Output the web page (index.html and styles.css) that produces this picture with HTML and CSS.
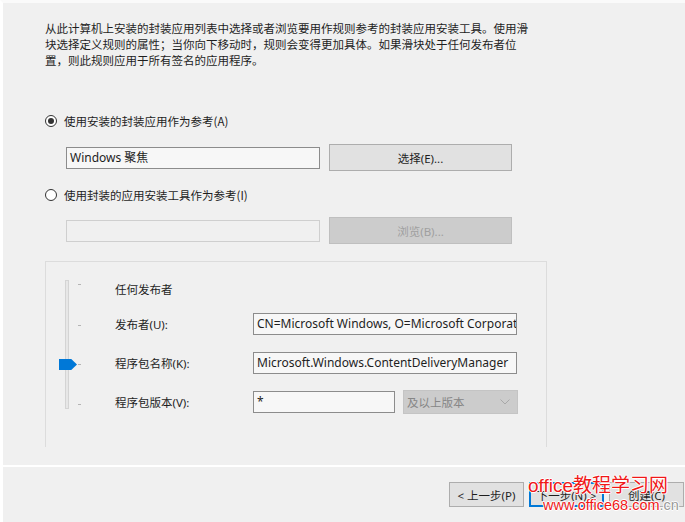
FILE: index.html
```html
<!DOCTYPE html>
<html lang="zh-CN">
<head>
<meta charset="utf-8">
<title>封装应用规则</title>
<link rel="stylesheet" href="styles.css">
</head>
<body>
<div class="window">
  <span class="side-mark"></span>
  <div class="main">
    <p class="intro">从此计算机上安装的封装应用列表中选择或者浏览要用作规则参考的封装应用安装工具。使用滑<br>块选择定义规则的属性；当你向下移动时，规则会变得更加具体。如果滑块处于任何发布者位<br>置，则此规则应用于所有签名的应用程序。</p>

    <div class="radio-row first"><span class="radio checked"></span><span>使用安装的封装应用作为参考(A)</span></div>
    <div class="field-row r-a">
      <div class="textbox wide">Windows 聚焦</div>
      <div class="btn">选择(E)...</div>
    </div>

    <div class="radio-row second"><span class="radio"></span><span>使用封装的应用安装工具作为参考(I)</span></div>
    <div class="field-row r-b">
      <div class="textbox wide disabled"></div>
      <div class="btn disabled">浏览(B)...</div>
    </div>

    <div class="group">
      <div class="slider">
        <span class="track"></span>
        <span class="tick t1"></span>
        <span class="tick t2"></span>
        <span class="tick t3"></span>
        <span class="tick t4"></span>
        <span class="thumb"></span>
      </div>
      <div class="rows">
        <div class="row row1"><span class="label">任何发布者</span></div>
        <div class="row row2"><span class="label">发布者(U):</span><div class="textbox field">CN=Microsoft Windows, O=Microsoft Corporation, L=Redmond</div></div>
        <div class="row row3"><span class="label">程序包名称(K):</span><div class="textbox field">Microsoft.Windows.ContentDeliveryManager</div></div>
        <div class="row row4"><span class="label">程序包版本(V):</span><div class="textbox short">*</div>
          <div class="combo"><span>及以上版本</span><svg width="10" height="6" viewBox="0 0 10 6"><polyline points="0.5,0.5 5,5 9.5,0.5" fill="none" stroke="#a8a8a8" stroke-width="1"/></svg></div>
        </div>
      </div>
    </div>
  </div>
  <div class="footer">
    <div class="btn foot">&lt; 上一步(P)</div>
    <div class="btn foot focused">下一步(N) &gt;</div>
    <div class="btn foot">创建(C)</div>
  </div>
  <div class="watermark">
    <div class="wm-title">office教程学习网</div>
    <div class="wm-url">www.office68.com<span class="wm-cn">.cn</span></div>
  </div>
</div>
</body>
</html>
```

FILE: styles.css
```css
* { box-sizing: border-box; }

html, body {
  margin: 0;
  padding: 0;
  background: #f0f0f0;
}

body {
  font-family: "Noto Sans", "Noto Sans CJK SC", sans-serif;
  font-size: 11.5px;
  color: #1e1e1e;
}

.window {
  position: relative;
  width: 685px;
  height: 522px;
  border-left: 3px solid #ffffff;
  border-top: 3px solid #fafafa;
  overflow: hidden;
}

.side-mark {
  position: absolute;
  left: -3px;
  top: 54px;
  width: 2px;
  height: 16px;
  background: #3f8fe0;
}

.main {
  height: 462px;
  padding: 17px 0 0 42px;
}

.intro {
  margin: 0;
  line-height: 16px;
  font-size: 11.5px;
  font-family: "Noto Sans CJK SC", sans-serif;
}

.radio-row {
  display: flex;
  align-items: center;
  height: 16px;
  gap: 7px;
  font-family: "Noto Sans CJK SC", sans-serif;
  line-height: 16px;
}
.radio-row.first { margin-top: 45px; }
.radio-row.second { margin-top: 16px; }

.radio {
  position: relative;
  width: 12px;
  height: 12px;
  border: 1px solid #333333;
  border-radius: 50%;
  background: #ffffff;
  flex: none;
}
.radio.checked::after {
  content: "";
  position: absolute;
  left: 2px;
  top: 2px;
  width: 6px;
  height: 6px;
  border-radius: 50%;
  background: #333333;
}

.field-row {
  display: flex;
  align-items: center;
  height: 27px;
  padding-left: 21px;
  gap: 9px;
}
.field-row.r-a { margin-top: 15px; }
.field-row.r-b { margin-top: 14px; }

.textbox {
  height: 22px;
  border: 1px solid #8c8c8c;
  background: #f7f7f7;
  padding: 0 3px;
  line-height: 20px;
  white-space: nowrap;
  overflow: hidden;
  font-size: 12px;
}
.textbox.wide { width: 254px; }
.textbox.disabled {
  border-color: #cfcfcf;
  background: #f0f0f0;
}

.btn {
  display: flex;
  align-items: center;
  justify-content: center;
  width: 183px;
  height: 27px;
  border: 1px solid #adadad;
  background: #e1e1e1;
  font-family: "Noto Sans", "Noto Sans CJK SC", sans-serif;
  white-space: nowrap;
}
.btn.disabled {
  background: #cccccc;
  border-color: #bfbfbf;
  color: #a0a0a0;
}

.group {
  display: flex;
  margin-top: 17px;
  width: 502px;
  height: 186px;
  border: 1px solid #dcdcdc;
  border-bottom: none;
}

.slider {
  position: relative;
  width: 69px;
  flex: none;
}
.track {
  position: absolute;
  left: 19px;
  top: 18px;
  width: 4px;
  height: 129px;
  background: #e7e7e7;
  border: 1px solid #d4d4d4;
}
.tick {
  position: absolute;
  left: 32px;
  width: 3px;
  height: 1px;
  background: #b4b4b4;
}
.t1 { top: 22px; }
.t2 { top: 63px; }
.t3 { top: 102px; }
.t4 { top: 142px; }
.thumb {
  position: absolute;
  left: 13px;
  top: 97px;
  width: 18px;
  height: 11px;
  background: #0078d7;
  clip-path: polygon(0 0, 68% 0, 100% 50%, 68% 100%, 0 100%);
}

.rows {
  display: flex;
  flex-direction: column;
  padding-top: 15px;
}
.row {
  display: flex;
  align-items: center;
  height: 24px;
}
.row2 { margin-top: 11px; }
.row3 { margin-top: 15px; }
.row4 { margin-top: 15px; }

.label {
  width: 138px;
  flex: none;
  font-family: "Noto Sans", "Noto Sans CJK SC", sans-serif;
}

.textbox.field { width: 264px; }
.textbox.short { width: 142px; }

.combo {
  display: flex;
  align-items: center;
  justify-content: space-between;
  width: 115px;
  height: 24px;
  margin-left: 8px;
  padding: 0 7px 0 3px;
  background: #cccccc;
  border: 1px solid #c4c4c4;
  color: #868686;
  font-family: "Noto Sans CJK SC", sans-serif;
}

.footer {
  display: flex;
  justify-content: flex-end;
  gap: 5px;
  border-top: 2px solid #ffffff;
  padding: 15px 1px 0 0;
  height: 57px;
}

.btn.foot {
  width: 75px;
  height: 25px;
}
.btn.focused {
  border: 2px solid #0078d7;
}

.watermark {
  position: absolute;
  left: 525px;
  top: 472px;
  font-family: "Liberation Sans", "Noto Sans CJK SC", sans-serif;
  color: #f01818;
  pointer-events: none;
}
.wm-title {
  font-size: 19px;
  line-height: 22px;
  text-shadow: 1px 0 #fff, -1px 0 #fff, 0 1px #fff, 0 -1px #fff;
}
.wm-url {
  margin-left: 15px;
  font-size: 14.5px;
  line-height: 16px;
  text-shadow: 1px 0 #fff, -1px 0 #fff, 0 1px #fff, 0 -1px #fff;
}
.wm-cn {
  color: #9a9a9a;
}
```
